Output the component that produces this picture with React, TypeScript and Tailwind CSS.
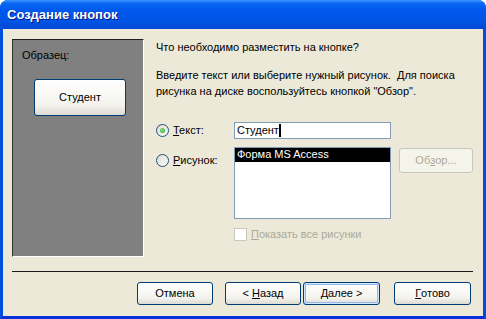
import React from "react";

const font = "font-['Liberation_Sans',Arial,sans-serif]";

function XpButton({
  children,
  className = "",
  isDefault = false,
  disabled = false,
}: {
  children: React.ReactNode;
  className?: string;
  isDefault?: boolean;
  disabled?: boolean;
}) {
  if (disabled) {
    return (
      <div
        className={`flex items-center justify-center rounded-[3px] border border-[#c9c7ba] bg-[#f5f4ea] text-[#aca899] ${className}`}
      >
        {children}
      </div>
    );
  }
  return (
    <div
      className={`flex items-center justify-center whitespace-pre rounded-[3px] border border-[#003c74] bg-[linear-gradient(to_bottom,#ffffff,#f4f3ee_70%,#dcdbd3)] text-black ${
        isDefault ? "shadow-[inset_0_0_0_1px_#cee7ff,inset_0_0_0_2px_#98b8ea]" : ""
      } ${className}`}
    >
      {children}
    </div>
  );
}

function Radio({ checked }: { checked?: boolean }) {
  return (
    <div className="flex h-[13px] w-[13px] shrink-0 items-center justify-center rounded-full border border-[#1c5180] bg-[linear-gradient(135deg,#dcd9d0,#ffffff)]">
      {checked && (
        <div className="h-[5px] w-[5px] rounded-full bg-[radial-gradient(circle_at_40%_40%,#8ee38e,#21a121)]" />
      )}
    </div>
  );
}

export default function App() {
  return (
    <div
      className={`flex h-[319px] w-[486px] flex-col overflow-hidden rounded-t-[8px] bg-[#0054e3] text-[11px] leading-[13px] ${font}`}
    >
      {/* Title bar */}
      <div className="flex h-[29px] shrink-0 items-center bg-[linear-gradient(to_bottom,#3d95ff_0%,#0a66f2_12%,#0058ee_35%,#0054e3_75%,#0048d4_100%)] pl-[7px]">
        <span className="text-[13px] font-bold text-white [text-shadow:1px_1px_0_#0a1883]">
          Создание кнопок
        </span>
      </div>

      {/* Frame */}
      <div className="flex flex-1 border-x-[3px] border-b-[3px] border-x-[#0050dd] border-b-[#0831d9]">
        <div className="flex flex-1 flex-col bg-[#ece9d8] pl-[9px] pt-[10px]">
          <div className="flex h-[218px]">
            {/* Sample panel */}
            <div className="flex w-[132px] shrink-0 flex-col border-b border-l border-r border-t border-b-white border-l-[#303030] border-r-white border-t-[#202020] bg-[#808080]">
              <div className="ml-[9px] mt-[9px] text-black">Образец:</div>
              <XpButton className="ml-[21px] mt-[17px] h-[37px] w-[92px]">Студент</XpButton>
            </div>

            {/* Right column */}
            <div className="ml-[12px] flex flex-col text-black">
              <p className="leading-[16px]">Что необходимо разместить на кнопке?</p>
              <p className="mt-[12px] leading-[16px]">
                Введите текст или выберите нужный рисунок.&nbsp; Для поиска
                <br />
                рисунка на диске воспользуйтесь кнопкой "Обзор".
              </p>

              <div className="mt-[23px] flex items-center">
                <div className="flex w-[78px] items-center">
                  <Radio checked />
                  <span className="ml-[4px]">
                    <u>Т</u>екст:
                  </span>
                </div>
                <div className="flex h-[17px] w-[157px] items-center border border-[#7f9db9] bg-white pl-[2px]">
                  <span>Студент</span>
                  <span className="h-[13px] w-[2px] bg-black" />
                </div>
              </div>

              <div className="mt-[8px] flex items-start">
                <div className="mt-[7px] flex w-[78px] items-center">
                  <Radio />
                  <span className="ml-[4px]">
                    <u>Р</u>исунок:
                  </span>
                </div>
                <div className="h-[72px] w-[157px] border border-[#7f9db9] bg-white">
                  <div className="h-[14px] bg-black pl-[2px] text-white">Форма MS Access</div>
                </div>
                <XpButton disabled className="ml-[8px] mt-[1px] h-[25px] w-[74px]">
                  Об<u>з</u>ор...
                </XpButton>
              </div>

              <div className="ml-[78px] mt-[9px] flex items-center text-[#aca899]">
                <div className="h-[13px] w-[13px] border border-[#cac8bb] bg-white" />
                <span className="ml-[4px]">
                  <u>П</u>оказать все рисунки
                </span>
              </div>
            </div>
          </div>

          <div className="mr-[10px] mt-[14px] h-px bg-[#1a1a1a]" />

          <div className="mt-[10px] flex pl-[125px]">
            <XpButton className="h-[23px] w-[76px]">Отмена</XpButton>
            <XpButton className="ml-[12px] h-[23px] w-[76px]">
              {"< "}
              <u>Н</u>азад
            </XpButton>
            <XpButton isDefault className="ml-[2px] h-[23px] w-[77px]">
              <u>Д</u>алее{" >"}
            </XpButton>
            <XpButton className="ml-[14px] h-[23px] w-[77px]">
              <u>Г</u>отово
            </XpButton>
          </div>
        </div>
      </div>
    </div>
  );
}
